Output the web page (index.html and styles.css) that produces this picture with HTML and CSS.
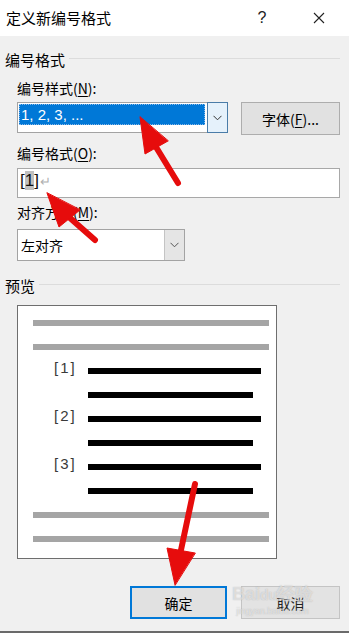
FILE: index.html
```html
<!doctype html>
<html>
    <head>
        <meta charset="utf-8" />
        <title>定义新编号格式</title>
        <link rel="stylesheet" href="styles.css">
    </head>
    <body>
        <div class="titlebar">
            <span class="title">定义新编号格式</span>
            <span class="tb-btn help">?</span>
            <span class="tb-btn close">
                <svg width="12" height="12" viewBox="0 0 12 12">
                    <path d="M1 1 L11 11 M11 1 L1 11" stroke="#222" stroke-width="1.1" fill="none" />
                </svg>
            </span>
        </div>

        <div class="group-head first">编号格式</div>

        <div class="section">
            <div class="label">编号样式(<u>N</u>):</div>
            <div class="row">
                <div class="combo combo-style">
                    <div class="sel">1, 2, 3, ...</div>
                    <div class="drop focused">
                        <svg width="9" height="6" viewBox="0 0 9 6">
                            <path d="M0.5 0.8 L4.5 4.8 L8.5 0.8" stroke="#333" stroke-width="1" fill="none" />
                        </svg>
                    </div>
                </div>
                <button class="btn font-btn">字体(<u>F</u>)...</button>
            </div>

            <div class="label label-gap">编号格式(<u>O</u>):</div>
            <div class="field">
                <span>[</span><span class="hl">1</span><span>]</span><span class="ret">↵</span>
            </div>

            <div class="label label-gap2">对齐方式(<u>M</u>):</div>
            <div class="combo combo-align">
                <div class="value">左对齐</div>
                <div class="drop">
                    <svg width="9" height="6" viewBox="0 0 9 6">
                        <path d="M0.5 0.8 L4.5 4.8 L8.5 0.8" stroke="#555" stroke-width="1" fill="none" />
                    </svg>
                </div>
            </div>
        </div>

        <div class="group-head preview-head">预览</div>

        <div class="section">
            <div class="preview">
                <div class="bar gray"></div>
                <div class="bar gray"></div>
                <div class="item"><span class="num">[1]</span><div class="bar black long"></div></div>
                <div class="item"><div class="bar black short"></div></div>
                <div class="item"><span class="num">[2]</span><div class="bar black long"></div></div>
                <div class="item"><div class="bar black short"></div></div>
                <div class="item"><span class="num">[3]</span><div class="bar black long"></div></div>
                <div class="item"><div class="bar black short"></div></div>
                <div class="bar gray"></div>
                <div class="bar gray"></div>
            </div>

            <div class="footer">
                <button class="btn ok-btn">确定</button>
                <button class="btn cancel-btn">取消</button>
            </div>
        </div>

        <div class="bottom-line"></div>

        <!-- annotation overlay -->
        <svg class="arrows" width="349" height="633" viewBox="0 0 349 633">
            <g fill="#e60c0c" stroke="#e60c0c" stroke-linecap="round">
                <line x1="156" y1="147" x2="178" y2="183" stroke-width="6" />
                <polygon points="140,117 145,154 168,141" stroke-width="1" />
                <line x1="70" y1="218" x2="95" y2="240" stroke-width="6" />
                <polygon points="47,193 59,227 80,210" stroke-width="1" />
                <line x1="181" y1="550" x2="195" y2="484" stroke-width="6" />
                <polygon points="175,585 167,548 195,553" stroke-width="1" />
            </g>
        </svg>

        <div class="watermark">
            <span class="wm-logo">Bai<span class="wm-paw">du</span>经验</span>
            <span class="wm-url">jingyan.baidu.com</span>
        </div>
    </body>
</html>
```

FILE: styles.css
```css
body {
    margin: 0;
    width: 349px;
    height: 633px;
    background-color: #f0f0f0;
    font-family: "Noto Sans CJK SC", "Liberation Sans", sans-serif;
    font-size: 14px;
    color: #000;
    position: relative;
    overflow: hidden;
}

u {
    text-decoration: underline;
    text-underline-offset: 2px;
}

.titlebar {
    height: 36px;
    background: white;
    display: flex;
    align-items: center;
    padding-left: 6px;
}

.title {
    font-size: 15px;
    flex: 1;
    line-height: 20px;
}

.tb-btn {
    width: 46px;
    height: 36px;
    display: flex;
    align-items: center;
    justify-content: center;
}

.help {
    font-family: "Liberation Sans", sans-serif;
    font-size: 16px;
    color: #222;
}

.close {
    margin-left: 11px;
    margin-right: 7px;
}

.group-head {
    display: flex;
    align-items: center;
    height: 20px;
    line-height: 20px;
    padding: 0 9px 0 5px;
    font-size: 15px;
}

.group-head::after {
    content: "";
    flex: 1;
    height: 1px;
    background: #dcdcdc;
    margin-left: 4px;
    margin-top: -4px;
}

.group-head.first {
    margin-top: 14px;
}

.section {
    padding: 0 9px 0 17px;
}

.label {
    height: 20px;
    line-height: 20px;
    margin-top: 8px;
}

.label-gap {
    margin-top: 9px;
}

.label-gap2 {
    margin-top: 4px;
}

.row {
    display: flex;
    margin-top: 4px;
    height: 32px;
}

.combo {
    display: flex;
    box-sizing: border-box;
    border: 1px solid #a3a3a3;
    background: white;
}

.combo-style {
    width: 211px;
    height: 31px;
}

.sel {
    flex: 1;
    height: 21px;
    margin: 1px 2px 0 1px;
    background: #0078d7;
    color: white;
    font-family: "Liberation Sans", sans-serif;
    font-size: 15px;
    line-height: 21px;
    padding-left: 2px;
    outline: 1px dotted #8ab8e6;
    outline-offset: -1px;
}

.drop {
    width: 21px;
    display: flex;
    align-items: center;
    justify-content: center;
    box-sizing: border-box;
}

.drop.focused {
    margin: -1px -1px -1px 0;
    border: 1px solid #4a7ca8;
    background: #e5f1fb;
}

.btn {
    box-sizing: border-box;
    font-family: "Noto Sans CJK SC", "Liberation Sans", sans-serif;
    font-size: 14px;
    background: #e1e1e1;
    border: 1px solid #adadad;
    color: #000;
    padding: 0;
    line-height: 20px;
}

.font-btn {
    margin-left: 13px;
    width: 99px;
    height: 33px;
}

.field {
    margin-top: 5px;
    height: 30px;
    box-sizing: border-box;
    border: 1px solid #a8a8a8;
    background: white;
    font-family: "Liberation Sans", sans-serif;
    font-size: 17px;
    line-height: 20px;
    padding: 2px 0 0 2px;
    color: #111;
}

.hl {
    background: #c0c0c0;
}

.ret {
    color: #b0b0b0;
    font-size: 13px;
    margin-left: 1px;
}

.combo-align {
    width: 168px;
    height: 32px;
    margin-top: 7px;
}

.value {
    flex: 1;
    line-height: 30px;
    padding-left: 3px;
    font-size: 14px;
}

.combo-align .drop {
    background: #e5e5e5;
    border-left: 1px solid #c4c4c4;
    width: 20px;
}

.preview-head {
    margin-top: 15px;
}

.preview {
    margin-top: 9px;
    width: 260px;
    height: 254px;
    box-sizing: border-box;
    border: 1px solid #6e6e6e;
    background: white;
    padding: 14px 7px 0 15px;
    display: flex;
    flex-direction: column;
    gap: 18px;
}

.bar {
    height: 6px;
}

.bar.gray {
    background: #a5a5a5;
}

.bar.black {
    background: #000;
}

.item {
    display: flex;
    height: 6px;
    padding-left: 55px;
    position: relative;
}

.num {
    position: absolute;
    left: 21px;
    top: -9px;
    font-family: "Liberation Sans", sans-serif;
    font-size: 15px;
    line-height: 18px;
    letter-spacing: 2px;
    color: #3a3a3a;
}

.bar.long {
    width: 173px;
}

.bar.short {
    width: 165px;
}

.footer {
    display: flex;
    justify-content: flex-end;
    gap: 14px;
    margin-top: 27px;
}

.ok-btn {
    width: 97px;
    height: 33px;
    border: 2px solid #0078d7;
}

.cancel-btn {
    width: 99px;
    height: 33px;
    background: #e3e3e3;
    border-color: #c4c4c4;
    color: #222;
}

.bottom-line {
    margin-top: 12px;
    height: 2px;
    background: #6a6a6a;
}

.arrows {
    position: absolute;
    top: 0;
    left: 0;
    pointer-events: none;
}

.watermark {
    position: absolute;
    left: 232px;
    top: 584px;
    display: flex;
    flex-direction: column;
    align-items: center;
    pointer-events: none;
    color: rgba(255, 255, 255, 0.55);
    text-shadow: 0 0 1px rgba(120, 120, 120, 0.5);
}

.wm-logo {
    font-family: "Liberation Sans", sans-serif;
    font-size: 18px;
    font-weight: bold;
    line-height: 20px;
}

.wm-paw {
    font-size: 14px;
}

.wm-url {
    font-family: "Liberation Sans", sans-serif;
    font-size: 9px;
    line-height: 12px;
}
```
